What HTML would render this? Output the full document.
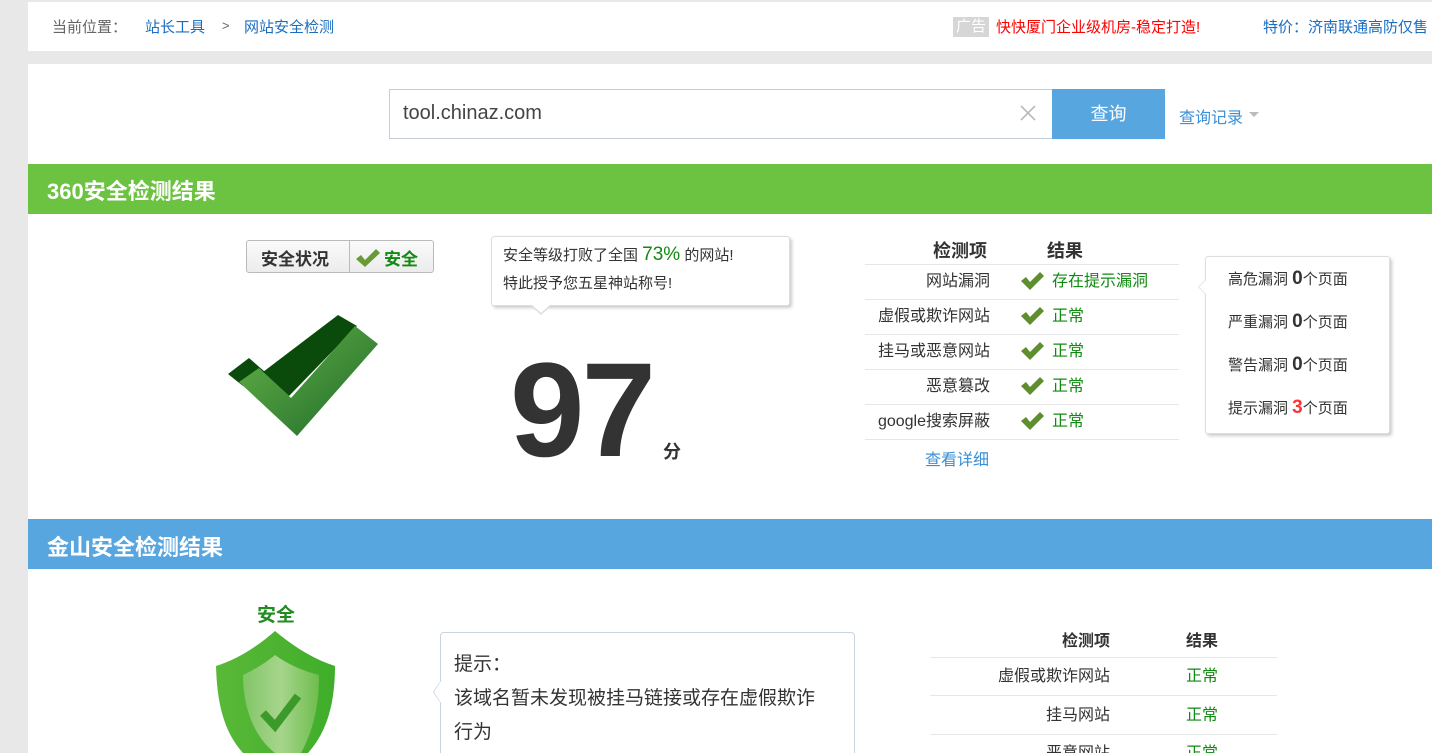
<!DOCTYPE html>
<html style="width:1432px;height:753px;overflow:hidden"><head><meta charset="utf-8"><style>
*{margin:0;padding:0;box-sizing:border-box}
body{width:1432px;height:753px;overflow:hidden;background:#e8e8e8;font-family:"Liberation Sans","Noto Sans CJK SC",sans-serif;position:relative;color:#333}
.a{position:absolute;white-space:nowrap}
.w{background:#fff}
</style></head><body>
<div class="a w" style="left:28px;top:2px;width:1404px;height:49px"></div>
<div class="a" style="left:52px;top:16px;font-size:15px;color:#666">当前位置：</div>
<div class="a" style="left:145px;top:16px;font-size:15px;color:#1a6ec2">站长工具</div>
<div class="a" style="left:222px;top:18px;font-size:13px;color:#666">&gt;</div>
<div class="a" style="left:244px;top:16px;font-size:15px;color:#1a6ec2">网站安全检测</div>
<div class="a" style="left:953px;top:17px;width:36px;height:20px;background:#d6d6d6;color:#fff;font-size:15px;text-align:center;line-height:20px">广告</div>
<div class="a" style="left:996px;top:16px;font-size:15px;color:#f00">快快厦门企业级机房-稳定打造!</div>
<div class="a" style="left:1263px;top:16px;font-size:15px;color:#1a6ec2">特价：济南联通高防仅售</div>

<div class="a w" style="left:28px;top:64px;width:1404px;height:689px"></div>
<div class="a" style="left:389px;top:89px;width:664px;height:50px;border:1px solid #c5ccd6;border-right:none"></div>
<div class="a" style="left:403px;top:102px;font-size:20px;color:#444">tool.chinaz.com</div>
<svg class="a" style="left:1020px;top:105px" width="16" height="16" viewBox="0 0 16 16"><path d="M1 1L15 15M15 1L1 15" stroke="#bbb" stroke-width="1.6"/></svg>
<div class="a" style="left:1052px;top:89px;width:113px;height:50px;background:#58a6e0;color:#fff;font-size:18px;text-align:center;line-height:50px">查询</div>
<div class="a" style="left:1179px;top:104px;font-size:16px;color:#3a8fd8">查询记录</div>
<div class="a" style="left:1249px;top:112px;border:5px solid transparent;border-top:5px solid #bbb"></div>

<div class="a" style="left:28px;top:164px;width:1404px;height:50px;background:#6cc241"></div>
<div class="a" style="left:47px;top:174px;font-size:22px;color:#fff;font-weight:bold">360安全检测结果</div>

<div class="a" style="left:246px;top:240px;width:188px;height:33px;border:1px solid #bbb;border-radius:3px;background:linear-gradient(#fafafa,#ececec)"></div>
<div class="a" style="left:349px;top:241px;width:1px;height:31px;background:#bbb"></div>
<div class="a" style="left:261px;top:245px;font-size:17px;font-weight:bold;color:#333">安全状况</div>
<div class="a" style="left:384px;top:245px;font-size:17px;font-weight:bold;color:#118a11">安全</div>
<svg class="a" style="left:355px;top:247px" width="26" height="22" viewBox="0 0 26 22"><path d="M1 12 L6 8 L10 13 L21 2 L25 6 L10 20 Z" fill="#6a9a38"/></svg>

<svg class="a" style="left:225px;top:312px" width="155" height="125" viewBox="0 0 155 125">
<defs><linearGradient id="g" x1="0" y1="0" x2="1" y2="1"><stop offset="0" stop-color="#66b348"/><stop offset="1" stop-color="#1e6a2a"/></linearGradient></defs>
<path d="M3 62 L24 46 L40 60 L18 74 Z" fill="#0a4a0a"/>
<path d="M38 60 L113 3 L132 14 L64 84 Z" fill="#0a4a0a"/>
<path d="M14 70 L34 56 L66 86 L130 14 L153 32 L72 124 Z" fill="url(#g)"/>
</svg>

<div class="a" style="left:491px;top:236px;width:299px;height:70px;border:1px solid #ddd;border-radius:3px;box-shadow:2px 2px 3px #ccc;background:#fff"></div>
<div class="a" style="left:530px;top:305px;border:11px solid transparent;border-top:10px solid #ddd"></div>
<div class="a" style="left:531px;top:304px;border:10px solid transparent;border-top:9px solid #fff"></div>
<div class="a" style="left:503px;top:241px;font-size:15px;line-height:28px;color:#333">安全等级打败了全国 <span style="color:#118a11;font-size:19px">73%</span> 的网站!<br>特此授予您五星神站称号!</div>
<div class="a" style="left:510px;top:336px;font-size:134px;font-weight:bold;color:#333;letter-spacing:-3px;line-height:150px">97</div>
<div class="a" style="left:663px;top:438px;font-size:18px;font-weight:bold;color:#333">分</div>

<div class="a" style="left:933px;top:237px;font-size:18px;font-weight:bold">检测项</div>
<div class="a" style="left:1047px;top:237px;font-size:18px;font-weight:bold">结果</div>
<div class="a" style="left:865px;top:264px;width:314px;border-top:1px solid #e6e6e6"></div>
<div class="a" style="left:865px;top:299px;width:314px;border-top:1px solid #e6e6e6"></div>
<div class="a" style="left:865px;top:334px;width:314px;border-top:1px solid #e6e6e6"></div>
<div class="a" style="left:865px;top:369px;width:314px;border-top:1px solid #e6e6e6"></div>
<div class="a" style="left:865px;top:404px;width:314px;border-top:1px solid #e6e6e6"></div>
<div class="a" style="left:865px;top:439px;width:314px;border-top:1px solid #e6e6e6"></div>
<div class="a" style="left:865px;top:264px;width:125px;text-align:right;font-size:16px;line-height:35px;color:#333">网站漏洞<br>虚假或欺诈网站<br>挂马或恶意网站<br>恶意篡改<br>google搜索屏蔽</div>
<div class="a" style="left:1052px;top:264px;font-size:16px;line-height:35px;color:#118a11">存在提示漏洞<br>正常<br>正常<br>正常<br>正常</div>
<svg class="a" style="left:1020px;top:271px" width="26" height="180" viewBox="0 0 26 180"><g fill="#5e8e2e">
<path d="M1 10 L6 6 L10 11 L20 1 L24 5 L10 19 Z"/><path d="M1 45 L6 41 L10 46 L20 36 L24 40 L10 54 Z"/><path d="M1 80 L6 76 L10 81 L20 71 L24 75 L10 89 Z"/><path d="M1 115 L6 111 L10 116 L20 106 L24 110 L10 124 Z"/><path d="M1 150 L6 146 L10 151 L20 141 L24 145 L10 159 Z"/></g></svg>
<div class="a" style="left:925px;top:446px;font-size:16px;color:#3a8fd8">查看详细</div>

<div class="a" style="left:1205px;top:256px;width:185px;height:178px;border:1px solid #ddd;border-radius:3px;box-shadow:2px 2px 3px #ccc;background:#fff"></div>
<div class="a" style="left:1190px;top:279px;border:8px solid transparent;border-right:8px solid #ddd"></div>
<div class="a" style="left:1192px;top:280px;border:7px solid transparent;border-right:7px solid #fff"></div>
<div class="a" style="left:1228px;top:258px;font-size:15px;line-height:42px;color:#333">高危漏洞 <b style="font-size:19px">0</b>个页面<br>严重漏洞 <b style="font-size:19px">0</b>个页面<br>警告漏洞 <b style="font-size:19px">0</b>个页面<br>提示漏洞 <b style="font-size:19px;color:#f33">3</b>个页面</div>

<div class="a" style="left:28px;top:519px;width:1404px;height:50px;background:#58a6e0"></div>
<div class="a" style="left:47px;top:530px;font-size:22px;color:#fff;font-weight:bold">金山安全检测结果</div>

<div class="a" style="left:257px;top:600px;font-size:19px;font-weight:bold;color:#228b22">安全</div>
<svg class="a" style="left:213px;top:631px" width="125" height="122" viewBox="0 0 125 122">
<defs><linearGradient id="s" x1="0" x2="1"><stop offset="0" stop-color="#5ab838"/><stop offset="1" stop-color="#3fae2a"/></linearGradient>
<linearGradient id="s2" x1="0" x2="1"><stop offset="0" stop-color="#82c566"/><stop offset=".5" stop-color="#a6d58d"/><stop offset="1" stop-color="#6fbd4d"/></linearGradient></defs>
<path d="M62 0 C45 15 25 28 3 35 C4 70 10 100 30 122 L95 122 C115 100 122 70 122 35 C100 28 80 15 62 0 Z" fill="url(#s)"/>
<path d="M62 24 C50 34 38 40 30 44 C30 75 40 105 62 122 L88 122 C100 100 106 75 106 44 C90 40 76 34 62 24 Z" fill="url(#s2)"/>
<path d="M50 82 L62 95 L85 65" stroke="#3c9a2a" stroke-width="8" fill="none"/>
</svg>

<div class="a" style="left:440px;top:632px;width:415px;height:130px;border:1px solid #c8d4e0;border-radius:4px;background:#fff"></div>
<div class="a" style="left:425px;top:680px;border:8px solid transparent;border-right:8px solid #c8d4e0;border-top-width:12px;border-bottom-width:12px"></div>
<div class="a" style="left:427px;top:681px;border:7px solid transparent;border-right:7px solid #fff;border-top-width:11px;border-bottom-width:11px"></div>
<div class="a" style="left:454px;top:648px;width:370px;white-space:normal;font-size:19px;line-height:34px;color:#333">提示：<br>该域名暂未发现被挂马链接或存在虚假欺诈行为</div>

<div class="a" style="left:1062px;top:627px;font-size:16px;font-weight:bold">检测项</div>
<div class="a" style="left:1186px;top:627px;font-size:16px;font-weight:bold">结果</div>
<div class="a" style="left:930px;top:657px;width:347px;border-top:1px solid #e6e6e6"></div>
<div class="a" style="left:930px;top:695px;width:347px;border-top:1px solid #e6e6e6"></div>
<div class="a" style="left:930px;top:734px;width:347px;border-top:1px solid #e6e6e6"></div>
<div class="a" style="left:930px;top:658px;width:180px;text-align:right;font-size:16px;line-height:38.5px">虚假或欺诈网站<br>挂马网站<br>恶意网站</div>
<div class="a" style="left:1186px;top:658px;font-size:16px;line-height:38.5px;color:#118a11">正常<br>正常<br>正常</div>
</body></html>
